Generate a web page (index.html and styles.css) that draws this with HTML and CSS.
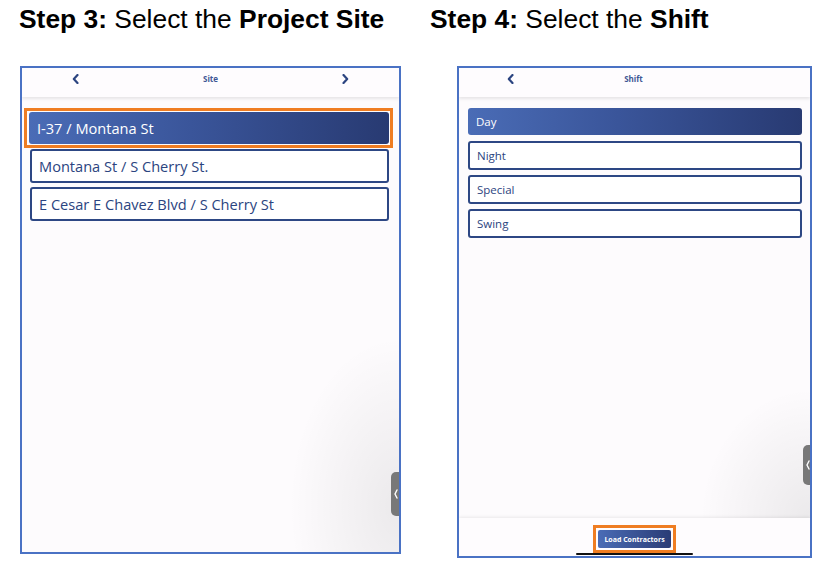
FILE: index.html
```html
<!DOCTYPE html>
<html lang="en">
<head>
<meta charset="utf-8">
<title>Select Site and Shift</title>
<link rel="stylesheet" href="styles.css">
</head>
<body>
<main class="page">
  <section class="step step-site">
    <h2 class="step-title"><b>Step 3:</b> Select the <b>Project Site</b></h2>
    <div class="device device-site">
      <header class="nav">
        <span class="nav-btn nav-prev"><svg width="7" height="10" viewBox="0 0 7 10"><path d="M5.5 1 L1.8 5 L5.5 9" fill="none" stroke="#2b4480" stroke-width="2.2" stroke-linecap="round" stroke-linejoin="round"/></svg></span>
        <span class="nav-title">Site</span>
        <span class="nav-btn nav-next"><svg width="7" height="10" viewBox="0 0 7 10"><path d="M1.5 1 L5.2 5 L1.5 9" fill="none" stroke="#2b4480" stroke-width="2.2" stroke-linecap="round" stroke-linejoin="round"/></svg></span>
      </header>
      <ul class="options options-site">
        <li class="option is-selected is-highlighted">I-37 / Montana St</li>
        <li class="option">Montana St / S Cherry St.</li>
        <li class="option">E Cesar E Chavez Blvd / S Cherry St</li>
      </ul>
      <div class="side-tab side-tab-site"><svg width="4" height="10" viewBox="0 0 4 10"><path d="M3 1 L1 5 L3 9" fill="none" stroke="#fff" stroke-width="1.4" stroke-linecap="round"/></svg></div>
    </div>
  </section>

  <section class="step step-shift">
    <h2 class="step-title"><b>Step 4:</b> Select the <b>Shift</b></h2>
    <div class="device device-shift">
      <header class="nav nav-shift">
        <span class="nav-btn nav-prev"><svg width="7" height="10" viewBox="0 0 7 10"><path d="M5.5 1 L1.8 5 L5.5 9" fill="none" stroke="#2b4480" stroke-width="2.2" stroke-linecap="round" stroke-linejoin="round"/></svg></span>
        <span class="nav-title">Shift</span>
        <span class="nav-btn nav-next"></span>
      </header>
      <ul class="options options-shift">
        <li class="option is-selected">Day</li>
        <li class="option">Night</li>
        <li class="option">Special</li>
        <li class="option">Swing</li>
      </ul>
      <footer class="device-footer">
        <span class="load-wrap"><button class="load-btn" type="button">Load Contractors</button></span>
        <span class="home-indicator"></span>
      </footer>
      <div class="side-tab side-tab-shift"><svg width="4" height="10" viewBox="0 0 4 10"><path d="M3 1 L1 5 L3 9" fill="none" stroke="#fff" stroke-width="1.4" stroke-linecap="round"/></svg></div>
    </div>
  </section>
</main>
</body>
</html>
```

FILE: styles.css
```css
* { box-sizing: border-box; }

html, body {
  margin: 0;
  padding: 0;
  background: #ffffff;
}

.page {
  display: flex;
  align-items: flex-start;
  padding-left: 19px;
  font-family: "Open Sans", "Noto Sans", sans-serif;
}

.step {
  display: flex;
  flex-direction: column;
  flex: none;
}

.step-site { width: 411px; }

.step-title {
  margin: 4px 0 0;
  font-family: "Liberation Sans", Arial, sans-serif;
  font-size: 26.4px;
  line-height: 30px;
  font-weight: normal;
  color: #000;
  white-space: nowrap;
}

.step-title b { font-weight: bold; }

.device {
  position: relative;
  display: flex;
  flex-direction: column;
  margin-top: 32px;
  border: 2px solid #4a72c4;
  background: #fdfbfd;
  overflow: hidden;
}

.device-site {
  margin-left: 1px;
  width: 381px;
  height: 488px;
}

.device-shift {
  margin-left: 27px;
  width: 355px;
  height: 492px;
}

.nav {
  flex: none;
  height: 29px;
  padding: 0 50px 7px;
  display: grid;
  grid-template-columns: 1fr auto 1fr;
  align-items: center;
  background: #fefcfe;
  box-shadow: 0 2px 3px rgba(0, 0, 0, 0.09);
  position: relative;
  z-index: 1;
}

.nav-shift { padding-left: 48px; }

.nav-btn { display: flex; }
.nav-prev { justify-self: start; }
.nav-next { justify-self: end; }

.nav-title {
  font-size: 8px;
  font-weight: 700;
  color: #3e5795;
  line-height: 10px;
}

.options {
  list-style: none;
  margin: 0;
  flex: 1;
  display: flex;
  flex-direction: column;
}

.options-site {
  padding: 14px 10px 0 8px;
  gap: 4px;
  background: radial-gradient(ellipse 110px 170px at 100% 90%, rgba(0, 0, 0, 0.07), rgba(0, 0, 0, 0) 100%), #fdfbfd;
}

.options-shift {
  padding: 10px 8px 0 9px;
  gap: 5px;
  background: radial-gradient(ellipse 110px 130px at 100% 100%, rgba(0, 0, 0, 0.07), rgba(0, 0, 0, 0) 100%), #fdfbfd;
}

.option {
  position: relative;
  display: flex;
  align-items: center;
  border: 2px solid #2d4784;
  border-radius: 3px;
  background: #ffffff;
  color: #2b4480;
  white-space: nowrap;
}

.options-site .option {
  height: 34px;
  padding-left: 7px;
  font-size: 14.6px;
}

.options-shift .option {
  height: 29px;
  padding-left: 7px;
  font-size: 11.5px;
}

.option.is-selected {
  border: 0;
  margin: 1px 0;
  padding-left: 8px;
  color: #ffffff;
  background: linear-gradient(90deg, #4a6cb6 0%, #3a559a 45%, #283a72 100%);
}

.options-site .option.is-selected { height: 32px; margin-left: -1px; }
.options-shift .option.is-selected { height: 27px; }

.option.is-highlighted::after {
  content: "";
  position: absolute;
  inset: -4px -4px -4px -5px;
  border: 3px solid #ef7d22;
}

.device-footer {
  flex: none;
  height: 38px;
  display: flex;
  flex-direction: column;
  align-items: center;
  padding-top: 12px;
  background: #fefcfe;
  box-shadow: 0 -1px 3px rgba(0, 0, 0, 0.08);
  position: relative;
}

.load-wrap {
  position: relative;
  display: flex;
}

.load-wrap::after {
  content: "";
  position: absolute;
  inset: -5px;
  border: 3px solid #ef7d22;
}

.load-btn {
  width: 73px;
  height: 18px;
  padding: 0;
  border: 0;
  border-radius: 2px;
  background: linear-gradient(90deg, #4a6cb6, #2a3c76);
  color: #ffffff;
  font-family: "Open Sans", "Noto Sans", sans-serif;
  font-size: 7px;
  font-weight: 700;
}

.home-indicator {
  margin-top: 5px;
  width: 117px;
  height: 2px;
  background: #111111;
  border-radius: 1px;
}

.side-tab {
  position: absolute;
  right: 0;
  display: flex;
  align-items: center;
  padding-left: 3px;
  background: #787878;
  border-radius: 5px 0 0 5px;
  z-index: 2;
}

.side-tab-site { top: 404px; width: 8px; height: 44px; }
.side-tab-shift { top: 377px; width: 7px; height: 40px; }
```
